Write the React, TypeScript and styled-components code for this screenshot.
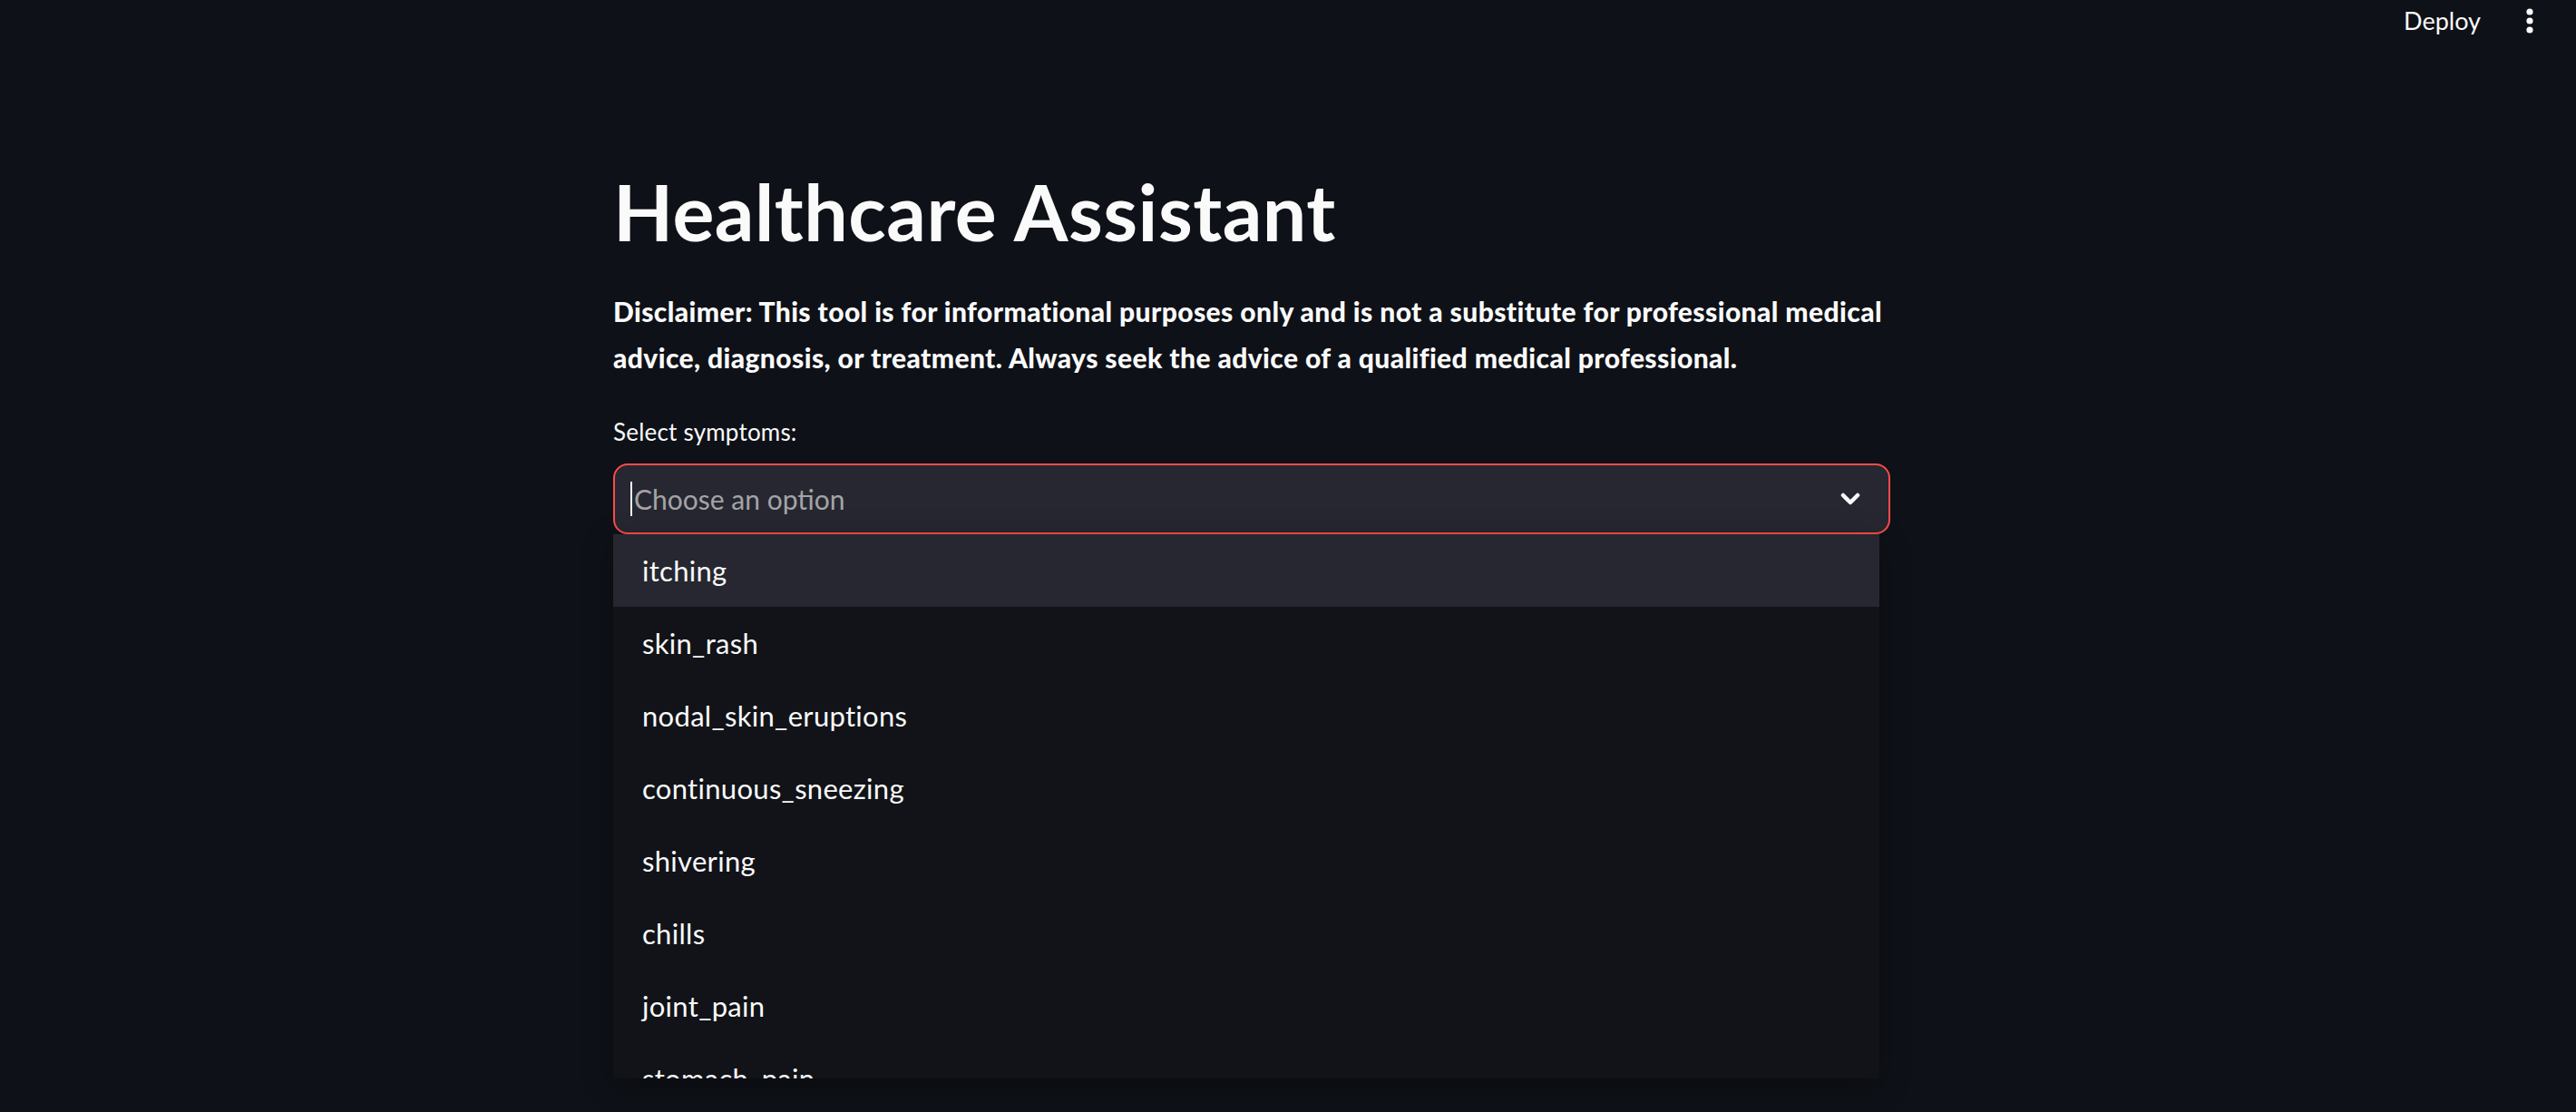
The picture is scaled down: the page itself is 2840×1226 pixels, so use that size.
import React from "react";
import styled, { createGlobalStyle } from "styled-components";

const GlobalStyle = createGlobalStyle`
  html, body {
    margin: 0;
    padding: 0;
    background: #0e1117;
  }
  body {
    font-family: Lato, "Noto Sans", sans-serif;
    color: #fafafa;
  }
  * { box-sizing: border-box; }
`;

const Page = styled.div`
  min-height: 1226px;
  background: #0e1117;
  position: relative;
  overflow: hidden;
`;

const Header = styled.header`
  height: 46px;
  display: flex;
  justify-content: flex-end;
  align-items: center;
  padding-right: 37px;
  gap: 40px;
`;

const DeployButton = styled.span`
  font-family: Lato, sans-serif;
  font-size: 27px;
  color: #fafafa;
  line-height: 46px;
`;

const MenuDots = styled.svg`
  width: 28px;
  height: 28px;
  display: block;
`;

const Main = styled.main`
  padding: 137px 0 0 676px;
  width: calc(676px + 1408px);
`;

const Title = styled.h1`
  margin: 0;
  font-family: Lato, sans-serif;
  font-weight: 700;
  font-size: 86px;
  line-height: 100px;
  letter-spacing: 0.5px;
  color: #fafafa;
`;

const Disclaimer = styled.p`
  margin: 35px 0 0;
  font-family: Lato, sans-serif;
  font-weight: 700;
  font-size: 30px;
  line-height: 51px;
  letter-spacing: 0.4px;
  color: #fafafa;
`;

const Field = styled.div`
  margin-top: 32px;
`;

const Label = styled.label`
  display: block;
  font-family: Lato, sans-serif;
  font-size: 26px;
  line-height: 48px;
  letter-spacing: 0.2px;
  color: #fafafa;
  margin-bottom: 11px;
`;

const SelectWrap = styled.div`
  position: relative;
`;

const SelectBox = styled.div`
  height: 78px;
  background: #262730;
  border: 2px solid #ff4b4b;
  border-radius: 16px;
  display: flex;
  align-items: center;
  padding: 0 31px 0 17px;
`;

const Caret = styled.span`
  width: 2px;
  height: 38px;
  background: #fafafa;
  margin-right: 2px;
`;

const Placeholder = styled.span`
  flex: 1;
  font-family: Lato, sans-serif;
  font-size: 30px;
  color: rgba(250, 250, 250, 0.6);
`;

const Chevron = styled.svg`
  width: 22px;
  height: 16px;
  display: block;
`;

const Menu = styled.ul`
  position: absolute;
  top: 100%;
  left: 0;
  width: 1396px;
  height: 600px;
  margin: 0;
  padding: 0;
  list-style: none;
  background: #111318;
  overflow: hidden;
  box-shadow: 0 8px 32px rgba(0, 0, 0, 0.3);
`;

const Option = styled.li<{ $active?: boolean }>`
  height: 80px;
  display: flex;
  align-items: center;
  padding-left: 32px;
  font-family: Lato, sans-serif;
  font-size: 31px;
  letter-spacing: 0.3px;
  color: #fafafa;
  background: ${(p) => (p.$active ? "#262730" : "transparent")};
`;

const options = [
  "itching",
  "skin_rash",
  "nodal_skin_eruptions",
  "continuous_sneezing",
  "shivering",
  "chills",
  "joint_pain",
  "stomach_pain",
];

export default function App() {
  return (
    <>
      <GlobalStyle />
      <Page>
        <Header>
          <DeployButton>Deploy</DeployButton>
          <MenuDots viewBox="0 0 28 28">
            <circle cx="14" cy="4" r="3.6" fill="#fafafa" />
            <circle cx="14" cy="14" r="3.6" fill="#fafafa" />
            <circle cx="14" cy="24" r="3.6" fill="#fafafa" />
          </MenuDots>
        </Header>
        <Main>
          <Title>Healthcare Assistant</Title>
          <Disclaimer>
            <strong>
              Disclaimer: This tool is for informational purposes only and is not a substitute for
              professional medical advice, diagnosis, or treatment. Always seek the advice of a
              qualified medical professional.
            </strong>
          </Disclaimer>
          <Field>
            <Label>Select symptoms:</Label>
            <SelectWrap>
              <SelectBox>
                <Caret />
                <Placeholder>Choose an option</Placeholder>
                <Chevron viewBox="0 0 22 16">
                  <path
                    d="M3 4 L11 12 L19 4"
                    fill="none"
                    stroke="#fafafa"
                    strokeWidth="4.5"
                    strokeLinecap="round"
                    strokeLinejoin="round"
                  />
                </Chevron>
              </SelectBox>
              <Menu>
                {options.map((o, i) => (
                  <Option key={o} $active={i === 0}>
                    {o}
                  </Option>
                ))}
              </Menu>
            </SelectWrap>
          </Field>
        </Main>
      </Page>
    </>
  );
}
